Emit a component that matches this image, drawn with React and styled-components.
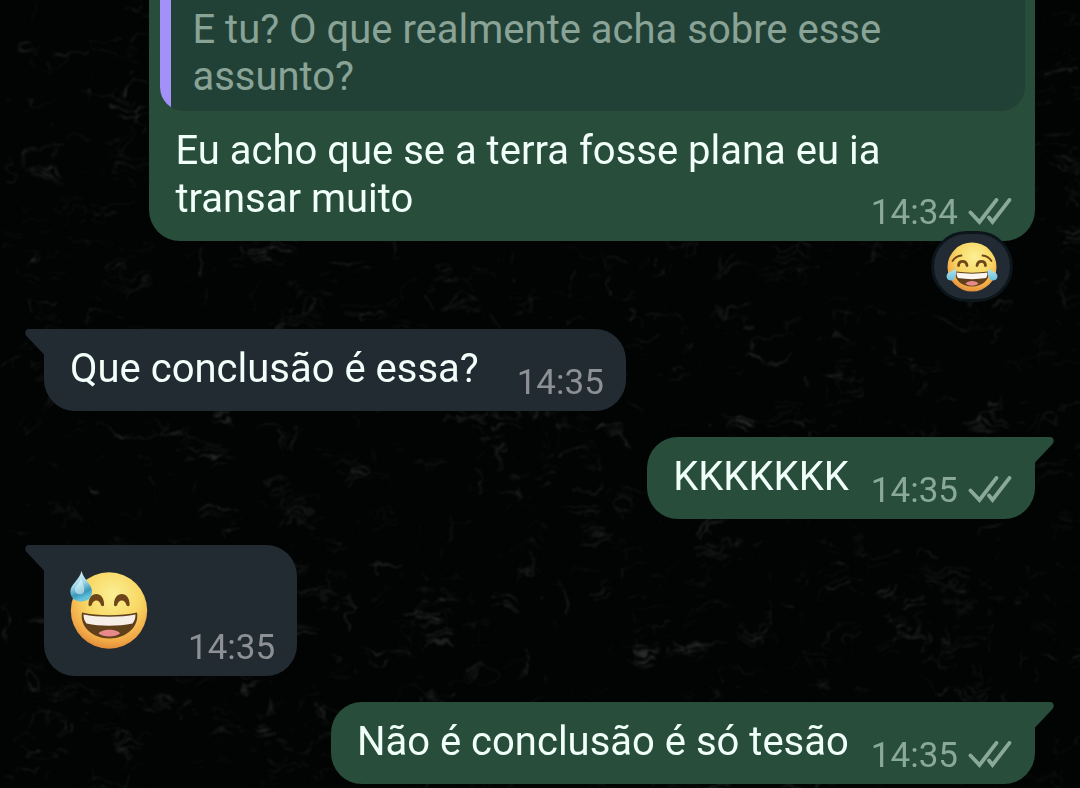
import styled, { createGlobalStyle, css, ThemeProvider } from 'styled-components';

const theme = {
  background: '#020303',
  outgoing: '#284d3b',
  incoming: '#232b32',
  quote: '#224136',
  quoteBar: '#a391f7',
  quoteText: '#8aa397',
  text: '#f0fff9',
  outgoingMeta: '#8ba99b',
  incomingMeta: '#8d9196',
  fontFamily: "Roboto, 'Noto Sans', sans-serif",
};

const GlobalStyle = createGlobalStyle`
  * {
    box-sizing: border-box;
  }
  body {
    margin: 0;
    background: ${theme.background};
    font-family: ${theme.fontFamily};
  }
`;

const Screen = styled.main`
  position: relative;
  min-height: 100vh;
  overflow: hidden;
`;

const WallpaperStyled = styled.svg`
  position: absolute;
  top: 0;
  left: 0;
  width: 100%;
  height: 100%;
`;

const MessageList = styled.ol`
  position: relative;
  display: flex;
  flex-direction: column;
  gap: 26px;
  margin: 0;
  padding: 0 45px 3px 44px;
  list-style: none;
`;

const Message = styled.li`
  position: relative;
  max-width: 82vw;
  align-self: ${({ $outgoing }) => ($outgoing ? 'flex-end' : 'flex-start')};
  margin-bottom: ${({ $reacted }) => ($reacted ? '62px' : '0')};
  color: ${({ theme }) => theme.text};
  background: ${({ theme, $outgoing }) =>
    $outgoing ? theme.outgoing : theme.incoming};
  border-radius: 31px;

  ${({ $tail, $outgoing }) =>
    $tail &&
    ($outgoing
      ? css`
          border-top-right-radius: 0;
        `
      : css`
          border-top-left-radius: 0;
        `)}
  ${({ $quoted }) =>
    $quoted &&
    css`
      border-top-left-radius: 0;
      border-top-right-radius: 0;
    `}
`;

const TailStyled = styled.svg`
  position: absolute;
  top: 0;
  width: 20px;
  height: 28px;
  ${({ $outgoing }) => ($outgoing ? 'left: calc(100% - 1px)' : 'right: calc(100% - 1px)')};
  transform: ${({ $outgoing }) => ($outgoing ? 'none' : 'scaleX(-1)')};
  fill: ${({ theme, $outgoing }) =>
    $outgoing ? theme.outgoing : theme.incoming};
`;

const Quote = styled.blockquote`
  display: flex;
  margin: 0 10px 0 11px;
  border-radius: 0 0 24px 24px;
  overflow: hidden;
  background: ${({ theme }) => theme.quote};
  color: ${({ theme }) => theme.quoteText};
  font-size: 40px;
  line-height: 47px;

  &::before {
    content: '';
    flex: none;
    width: 11px;
    background: ${({ theme }) => theme.quoteBar};
  }

  p {
    margin: 0;
    padding: 6px 20px 11px 21px;
  }
`;

const Body = styled.div`
  display: ${({ $stacked }) => ($stacked ? 'grid' : 'flex')};
  column-gap: ${({ $outgoing }) => ($outgoing ? '22px' : '38px')};
  padding: ${({ $outgoing }) =>
    $outgoing ? '16px 23px 8px 26px' : '16px 22px 8px 26px'};

  > * {
    ${({ $stacked }) => $stacked && 'grid-area: 1 / 1;'}
  }
`;

const Text = styled.p`
  margin: 0;
  padding: ${({ $stacked }) => ($stacked ? '0 60px 10px 0' : '0 0 10px')};
  font-size: 40px;
  line-height: 48px;
`;

const Meta = styled.div`
  display: flex;
  align-items: center;
  align-self: end;
  justify-self: end;
  gap: 10px;
  font-size: 35px;
  line-height: 41px;
  color: ${({ theme, $outgoing }) =>
    $outgoing ? theme.outgoingMeta : theme.incomingMeta};

  svg {
    width: 44px;
    height: 30px;
  }
`;

const BigEmoji = styled.div`
  padding: 10px 0 18px;

  svg {
    display: block;
    width: 80px;
    height: 79px;
  }
`;

const Reaction = styled.button`
  position: absolute;
  right: 22px;
  bottom: -61px;
  display: flex;
  align-items: center;
  justify-content: center;
  width: 82px;
  height: 71px;
  padding: 0;
  border: 3px solid #0b151a;
  border-radius: 36px;
  background: #222a33;

  svg {
    width: 52px;
    height: 50px;
  }
`;

// Small seeded generator so the doodles stay the same on every render
const createRandom = (seed) => () => {
  seed = (seed * 16807) % 2147483647;
  return seed / 2147483647;
};

const random = createRandom(77);

const SHAPES = [
  'M0 0H34',
  'M0 0H52M6 8H40',
  'M0 10V0H22',
  'M0 0V24',
  'M0 4q12-6 24 0t24-2',
  'M0 16V5a5 5 0 0 1 5-5H40',
  'M0 5a7 5 0 1 0 14 0a7 5 0 1 0-14 0',
  'M0 0H28M2 5H26M0 10H30',
  'M0 0q6 5 0 10t0 10t0 8',
  'M0 12C4-2 24-2 30 10',
  'M0 14Q10 12 16 0M4 18Q16 14 20 4',
];

const doodles = Array.from({ length: 1500 }, () => ({
  x: Math.round(random() * 1080),
  y: Math.round(random() * 790),
  path: SHAPES[Math.floor(random() * SHAPES.length)],
  opacity: 0.03 + random() * random() * 0.14,
}));

function Wallpaper() {
  return (
    <WallpaperStyled
      viewBox="0 0 1080 788"
      preserveAspectRatio="xMidYMid slice"
      aria-hidden="true"
    >
      <defs>
        {/* bends the strokes and lets them fade out in patches */}
        <filter id="worn" x="0" y="0" width="100%" height="100%">
          <feTurbulence
            type="fractalNoise"
            baseFrequency="0.035"
            numOctaves="3"
            seed="4"
            result="noise"
          />
          <feDisplacementMap
            in="SourceGraphic"
            in2="noise"
            scale="26"
            xChannelSelector="R"
            yChannelSelector="G"
            result="bent"
          />
          <feGaussianBlur in="bent" stdDeviation="1.2 0.8" result="soft" />
          <feColorMatrix
            in="noise"
            type="matrix"
            values="0 0 0 0 1  0 0 0 0 1  0 0 0 0 1  0 0 5 0 -1.9"
            result="patches"
          />
          <feComposite in="soft" in2="patches" operator="in" />
        </filter>
      </defs>
      <g fill="none" stroke="#c9cdc9" strokeWidth="2" filter="url(#worn)">
        {doodles.map(({ x, y, path, opacity }, index) => (
          <path
            key={`doodle-${index}`}
            d={path}
            transform={`translate(${x} ${y})`}
            opacity={opacity}
          />
        ))}
      </g>
    </WallpaperStyled>
  );
}

function Tail({ outgoing }) {
  return (
    <TailStyled $outgoing={outgoing} viewBox="0 0 20 28" aria-hidden="true">
      <path d="M0 0H16C19.500 0 21 4 18.500 7L1 25.500V28H0z" />
    </TailStyled>
  );
}

function DoubleCheck() {
  return (
    <svg viewBox="0 0 44 30" role="img" aria-label="Entregue">
      <g
        fill="none"
        stroke="currentColor"
        strokeWidth="3.800"
        strokeLinecap="round"
      >
        <path d="M2.500 14.500L11.500 24L28.500 1.900" />
        <path d="M21 19.500L24.500 24L41.500 1.900" />
      </g>
    </svg>
  );
}

function FaceGradient({ id }) {
  return (
    <radialGradient id={id} cx="0.55" cy="0.3" r="0.74">
      <stop offset="0" stopColor="#fbf094" />
      <stop offset="0.5" stopColor="#f8d764" />
      <stop offset="0.82" stopColor="#f2a947" />
      <stop offset="1" stopColor="#dd8434" />
    </radialGradient>
  );
}

function SweatSmile() {
  return (
    <svg viewBox="0 0 80 79" role="img" aria-label="😅">
      <defs>
        <FaceGradient id="sweat-face" />
        <linearGradient id="sweat-drop" x1="0" y1="0" x2="0.3" y2="1">
          <stop offset="0" stopColor="#e4f6fa" />
          <stop offset="0.5" stopColor="#9fd8ea" />
          <stop offset="0.8" stopColor="#3b97b8" />
          <stop offset="1" stopColor="#64c4dc" />
        </linearGradient>
      </defs>
      <circle cx="39" cy="39.500" r="38.200" fill="url(#sweat-face)" />
      <g fill="#6d4518">
        <path d="M18.500 34c0-7.500 3.500-11 7.800-11s7.800 3.500 7.800 11c0 1.500-2.800 1.500-3.200 0c-.8-3-2.400-4.500-4.600-4.500s-3.800 1.500-4.600 4.500c-.4 1.500-3.200 1.500-3.200 0z" />
        <path d="M44 34c0-7.500 3.500-11 7.800-11s7.800 3.500 7.800 11c0 1.500-2.800 1.500-3.200 0c-.8-3-2.400-4.500-4.600-4.500s-3.800 1.500-4.600 4.500c-.4 1.500-3.200 1.500-3.200 0z" />
      </g>
      <path
        d="M12 41.500C27 45 52 45 67 41.500C69.500 55 57 67.500 39.500 67.500S9.500 55 12 41.500z"
        fill="#60401a"
      />
      <path
        d="M13.500 43.500C28 46.500 51 46.500 65.500 43.500C65.500 47 64.500 50 62.500 52.500C48 55.500 30 55.500 16.500 52.500C14.500 50 13.500 47 13.500 43.500z"
        fill="#f6efe8"
      />
      <path
        d="M28.500 62.500C32 57.500 47 57.500 50 62.500C45 66.500 33.500 66.500 28.500 62.500z"
        fill="#e88a8c"
      />
      <path
        d="M11.500 0C14 9 22 13.500 22 20.500C22 27 17.500 30.500 11.200 30.500S.4 27 .4 20.500C.4 13.500 9.500 9 11.500 0z"
        fill="url(#sweat-drop)"
      />
      <path
        d="M5 17C8 13 10 11 11 7C13 14 15 16 14 21C12 25 4 24 5 17z"
        fill="#e6f7fb"
        opacity="0.55"
      />
    </svg>
  );
}

function TearsOfJoy() {
  return (
    <svg viewBox="0 0 52 50" role="img" aria-label="😂">
      <defs>
        <FaceGradient id="joy-face" />
        <linearGradient id="joy-tear" x1="0" y1="0" x2="0" y2="1">
          <stop offset="0" stopColor="#b5e3ee" />
          <stop offset="1" stopColor="#6dbfdc" />
        </linearGradient>
      </defs>
      <circle cx="26" cy="25" r="24.500" fill="url(#joy-face)" />
      <g fill="none" stroke="#6d4518" strokeLinecap="round">
        <path d="M6.500 19C8.500 16 11 14 15.500 13.500" strokeWidth="1.800" />
        <path d="M45.500 19C43.500 16 41 14 36.500 13.500" strokeWidth="1.800" />
        <path d="M12.500 23.500C13 18 20 18 21 23.500" strokeWidth="2.800" />
        <path d="M31 23.500C32 18 39 18 39.500 23.500" strokeWidth="2.800" />
      </g>
      <path
        d="M9.500 29.500C20 31 32 31 42.500 29.500C44 38 36 44.500 26 44.500S8 38 9.500 29.500z"
        fill="#60401a"
      />
      <path
        d="M10.500 30.500C20 32 32 32 41.500 30.500C41.500 33 41 35 40 36C31 37.500 21 37.500 12 36C11 35 10.500 33 10.500 30.500z"
        fill="#fbf7f0"
      />
      <path
        d="M19.500 41.500C22 38 30 38 32.500 41.500C29 44.500 23 44.500 19.500 41.500z"
        fill="#e88a8c"
      />
      <path
        d="M10 26.500C10.500 33 9.500 38.500 5 38.500C1.500 38.500 0 35.500 .8 33C2 29 7 29.500 10 26.500z"
        fill="url(#joy-tear)"
      />
      <path
        d="M42 26.500C41.500 33 42.500 38.500 47 38.500C50.500 38.500 52 35.500 51.200 33C50 29 45 29.500 42 26.500z"
        fill="url(#joy-tear)"
      />
    </svg>
  );
}

const messages = [
  {
    outgoing: true,
    quote: 'E tu? O que realmente acha sobre esse assunto?',
    text: 'Eu acho que se a terra fosse plana eu ia transar muito',
    time: '14:34',
    reaction: <TearsOfJoy />,
  },
  { text: 'Que conclusão é essa?', time: '14:35', tail: true },
  { outgoing: true, text: 'KKKKKKK', time: '14:35', tail: true },
  { emoji: <SweatSmile />, time: '14:35', tail: true },
  {
    outgoing: true,
    text: 'Não é conclusão é só tesão',
    time: '14:35',
    tail: true,
  },
];

function ChatMessage({ outgoing, quote, text, emoji, time, tail, reaction }) {
  return (
    <Message
      $outgoing={outgoing}
      $tail={tail}
      $quoted={!!quote}
      $reacted={!!reaction}
    >
      {tail && <Tail outgoing={outgoing} />}
      {quote && (
        <Quote>
          <p>{quote}</p>
        </Quote>
      )}
      <Body $outgoing={outgoing} $stacked={!!quote}>
        {emoji ? (
          <BigEmoji>{emoji}</BigEmoji>
        ) : (
          <Text $stacked={!!quote}>{text}</Text>
        )}
        <Meta $outgoing={outgoing}>
          <time>{time}</time>
          {outgoing && <DoubleCheck />}
        </Meta>
      </Body>
      {reaction && <Reaction type="button">{reaction}</Reaction>}
    </Message>
  );
}

export default function App() {
  return (
    <ThemeProvider theme={theme}>
      <GlobalStyle />
      <Screen>
        <Wallpaper />
        <MessageList>
          {messages.map((message, index) => (
            <ChatMessage key={`message-${index}`} {...message} />
          ))}
        </MessageList>
      </Screen>
    </ThemeProvider>
  );
}
